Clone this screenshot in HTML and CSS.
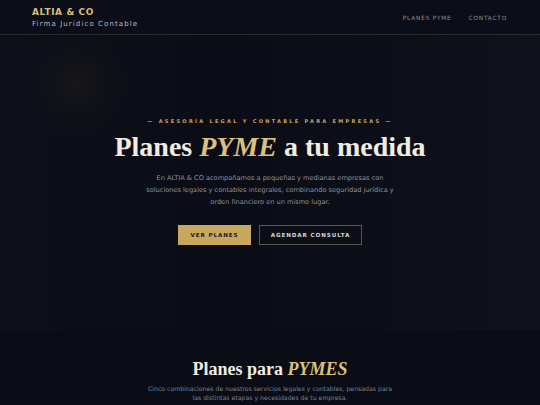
FILE: index.html
```html
<!DOCTYPE html>
<html lang="es">
<head>
<meta charset="utf-8">
<title>ALTIA &amp; CO</title>
<link rel="stylesheet" href="styles.css">
</head>
<body>
<header class="header">
  <div class="brand">
    <div class="brand-name">ALTIA &amp; CO</div>
    <div class="brand-sub">Firma Jurídico Contable</div>
  </div>
  <nav class="nav">
    <a href="#planes">PLANES PYME</a>
    <a href="#contacto">CONTACTO</a>
  </nav>
</header>
<section class="hero">
  <div class="eyebrow">— ASESORÍA LEGAL Y CONTABLE PARA EMPRESAS —</div>
  <h1 class="title">Planes <em>PYME</em> a tu medida</h1>
  <p class="lead">En ALTIA &amp; CO acompañamos a pequeñas y medianas empresas con soluciones legales y contables integrales, combinando seguridad jurídica y orden financiero en un mismo lugar.</p>
  <div class="actions">
    <a class="btn btn-gold" href="#planes">VER PLANES</a>
    <a class="btn btn-outline" href="#contacto">AGENDAR CONSULTA</a>
  </div>
</section>
<section class="plans" id="planes">
  <h2 class="plans-title">Planes para <em>PYMES</em></h2>
  <p class="plans-sub">Cinco combinaciones de nuestros servicios legales y contables, pensadas para las distintas etapas y necesidades de tu empresa.</p>
</section>
</body>
</html>
```
FILE: styles.css
```css
* { box-sizing: border-box; }
html, body { margin: 0; padding: 0; }
body {
  background: #0a0d16;
  font-family: "DejaVu Sans", sans-serif;
  color: #e9e4d8;
  overflow: hidden;
  height: 405px;
}
a { text-decoration: none; color: inherit; }

.header {
  height: 35px;
  display: flex;
  justify-content: space-between;
  align-items: center;
  padding: 0 33px 0 32px;
  background: #0b0e18;
  border-bottom: 1px solid #2b2a2a;
}
.brand { display: flex; flex-direction: column; gap: 3px; padding-top: 1px; }
.brand-name {
  font-weight: bold;
  font-size: 9px;
  letter-spacing: 0.6px;
  color: #d8bd78;
  line-height: 10px;
}
.brand-sub {
  font-size: 7px;
  letter-spacing: 1.1px;
  color: #b9bcc4;
  line-height: 8px;
}
.nav { display: flex; gap: 17px; padding-top: 1px; }
.nav a {
  font-size: 5.8px;
  letter-spacing: 0.8px;
  color: #8a8d97;
}

.hero {
  height: 295px;
  display: flex;
  flex-direction: column;
  align-items: center;
  padding-top: 82px;
  background:
    radial-gradient(circle at 78px 48px, rgba(55, 46, 28, 0.28) 0, rgba(40, 35, 25, 0.12) 28px, rgba(0,0,0,0) 60px),
    linear-gradient(90deg, #0d1019 0%, #0a0d16 40%, #0b0e17 60%, #0f121b 100%);
}
.eyebrow {
  font-size: 5px;
  font-weight: bold;
  letter-spacing: 2.3px;
  color: #c5a862;
  line-height: 8px;
}
.title {
  margin: 6px 0 0;
  font-family: "Liberation Serif", serif;
  font-weight: bold;
  font-size: 28px;
  line-height: 32px;
  color: #f1ece1;
}
.title em, .plans-title em {
  color: #dcc07c;
  font-style: italic;
}
.lead {
  margin: 9px 0 0;
  width: 262px;
  text-align: center;
  font-size: 6.6px;
  line-height: 12px;
  color: #8e919b;
}
.actions {
  display: flex;
  gap: 8px;
  margin-top: 17px;
}
.btn {
  height: 20px;
  display: flex;
  align-items: center;
  justify-content: center;
  font-size: 5.6px;
  font-weight: bold;
  letter-spacing: 0.9px;
}
.btn-gold {
  width: 73px;
  background: #c8a85e;
  color: #1a1a1a;
}
.btn-outline {
  width: 103px;
  border: 1px solid #5d5646;
  color: #dcd8cf;
}

.plans {
  display: flex;
  flex-direction: column;
  align-items: center;
  padding-top: 27px;
  background: #0a0d16;
}
.plans-title {
  margin: 0;
  font-family: "Liberation Serif", serif;
  font-weight: bold;
  font-size: 18px;
  line-height: 24px;
  color: #f1ece1;
}
.plans-sub {
  margin: 3px 0 0;
  width: 250px;
  text-align: center;
  font-size: 6.2px;
  line-height: 9px;
  color: #7e818b;
}
```
